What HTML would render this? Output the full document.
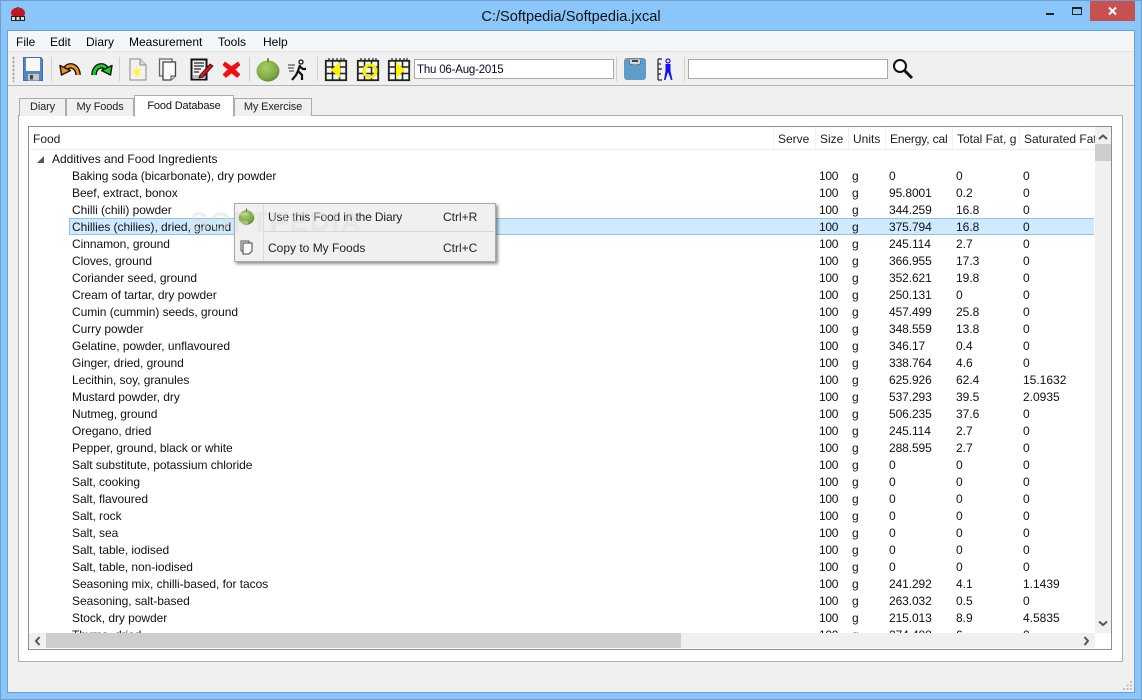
<!DOCTYPE html>
<html><head><meta charset="utf-8"><title>C:/Softpedia/Softpedia.jxcal</title>
<style>
html,body{margin:0;padding:0;width:1142px;height:700px;overflow:hidden;background:#8bc6fa;font-family:"Liberation Sans",sans-serif;font-size:12px;color:#111}
div,span,svg{position:absolute;white-space:nowrap}
svg{overflow:visible}
.sep{width:1px;background:#d0d0d0;top:57px;height:24px}
.t{top:1px;line-height:17px}
.r{left:29px;width:1066px;height:17px}
.a{left:43px;letter-spacing:-.05px}.b{left:790px;letter-spacing:-.3px}.c{left:823px}.d{left:860px;letter-spacing:-.1px}.e{left:927px}.f{left:994px}
.hd{top:131px;line-height:16px;color:#1c1c1c}
.hs{top:127px;height:23px;width:1px;background:#edf3f9}
.m{top:35px;line-height:14px;color:#000}
.tab{top:98px;height:17px;background:#f0f0f0;border:1px solid #acacac;border-bottom:none;line-height:16px;text-align:center;color:#222;font-size:11px;letter-spacing:-.15px}
</style></head><body>
<div style="left:0;top:0;width:1142px;height:700px;box-sizing:border-box;border:1px solid #6f9fcf;background:#8bc6fa"></div>
<svg style="left:9px;top:7px" width="18" height="16" viewBox="0 0 18 16"><ellipse cx="9" cy="6" rx="7" ry="5.500" fill="#c8141c"/><rect x="8" y="0" width="2" height="3" fill="#555"/><rect x="2" y="9" width="14" height="5" fill="#222"/><rect x="3" y="10" width="3" height="3" fill="#ddd"/><rect x="7.500" y="10" width="3" height="3" fill="#ddd"/><rect x="12" y="10" width="3" height="3" fill="#ddd"/></svg>
<div style="left:340px;width:462px;top:8px;text-align:center;font-size:14.6px;line-height:18px;color:#111">C:/Softpedia/Softpedia.jxcal</div>
<div style="left:1046px;top:13px;width:8px;height:2px;background:#222"></div>
<div style="left:1072px;top:7px;width:8px;height:5px;border:1px solid #222;border-top-width:2px"></div>
<div style="left:1090px;top:1px;width:45px;height:20px;background:#c75050"></div>
<svg style="left:1108px;top:7px" width="9" height="8"><path d="M1 0.500L8 7.500M8 0.500L1 7.500" stroke="#fff" stroke-width="2"/></svg>

<div style="left:7px;top:30px;width:1128px;height:663px;background:#6f9fcf"></div>
<div style="left:8px;top:31px;width:1126px;height:661px;background:#f0f0f0"></div>
<div style="left:8px;top:31px;width:1126px;height:20px;background:#f5f6f7"></div>
<div style="left:8px;top:51px;width:1126px;height:1px;background:#e4e4e4"></div>
<div style="left:8px;top:85px;width:1126px;height:1px;background:#b4b4b4"></div>
<div class="m" style="left:16px">File</div>
<div class="m" style="left:50px">Edit</div>
<div class="m" style="left:86px">Diary</div>
<div class="m" style="left:129px">Measurement</div>
<div class="m" style="left:218px">Tools</div>
<div class="m" style="left:263px">Help</div>

<!-- toolbar -->
<div style="left:12px;top:56px;width:3px;height:26px;background-image:radial-gradient(#aaa 1px,transparent 1px);background-size:3px 4px"></div>
<svg style="left:23px;top:57px" width="20" height="24" viewBox="0 0 20 24"><path d="M0.500 0.500H18L19.500 2.500V23.500H0.500Z" fill="#5586c4" stroke="#3f6ea8"/><rect x="3" y="1" width="14" height="13" fill="#f8f8f8"/><rect x="5" y="17" width="11" height="6.500" fill="#c4c8cc"/><rect x="7" y="18" width="3" height="4.500" fill="#444"/></svg>
<div class="sep" style="left:51px"></div>
<svg style="left:59px;top:62px" width="22" height="14" viewBox="0 0 22 14"><path d="M19 13C19 4 10 1 6.500 7" fill="none" stroke="#111" stroke-width="5.600"/><path d="M19 13C19 4 10 1 6.500 7" fill="none" stroke="#f0901e" stroke-width="3"/><path d="M1 3.500L11.500 8.500L2.500 13Z" fill="#f0901e" stroke="#111" stroke-width="1.400" stroke-linejoin="round"/></svg>
<svg style="left:91px;top:62px" width="22" height="14" viewBox="0 0 22 14"><path d="M3 13C3 4 12 1 15.500 7" fill="none" stroke="#111" stroke-width="5.600"/><path d="M3 13C3 4 12 1 15.500 7" fill="none" stroke="#14d228" stroke-width="3"/><path d="M21 3.500L10.500 8.500L19.500 13Z" fill="#14d228" stroke="#111" stroke-width="1.400" stroke-linejoin="round"/></svg>
<div class="sep" style="left:119px"></div>
<svg style="left:129px;top:58px" width="18" height="23" viewBox="0 0 18 23"><path d="M1 1H11L17 7V22H1Z" fill="#f4f2ec" stroke="#888"/><path d="M11 1V7H17" fill="#ddd" stroke="#888"/><path d="M8 8L9 12L13 11L10 14L13 17L9 15.500L8 20L7 15.500L3 17L6 14L3 11L7 12Z" fill="#f8f83a"/></svg>
<svg style="left:158px;top:58px" width="19" height="23" viewBox="0 0 19 23"><path d="M1.500 1H14V18H1.500Z" fill="#f4f4f4" stroke="#666" stroke-width="1.300"/><path d="M5 4H17.500V18L13 22H5Z" fill="#fafafa" stroke="#444" stroke-width="1.300"/><path d="M13 22V18H17.500" fill="#ddd" stroke="#444"/></svg>
<svg style="left:190px;top:58px" width="24" height="23" viewBox="0 0 24 23"><rect x="1.500" y="1.500" width="15" height="20" fill="#f5f5f5" stroke="#111" stroke-width="2"/><path d="M4 5H14M4 8H14M4 11H11M4 14H9" stroke="#222" stroke-width="1.300"/><rect x="3" y="17" width="12" height="4" fill="#bbb"/><path d="M10 17L20 6L23 8L13 19L9 20Z" fill="#e0101c" stroke="#111" stroke-width=".8"/></svg>
<svg style="left:222px;top:60px" width="19" height="19" viewBox="0 0 19 19"><path d="M3 2.500L9.500 7L16 2.500L17.500 5L12.500 9.500L17.500 14.500L15 17L9.500 12.500L4 17L1.500 14.500L6.500 9.500L1.500 5Z" fill="#ee0f17" stroke="#ee0f17" stroke-width="1.400" stroke-linejoin="round"/></svg>
<div class="sep" style="left:249px"></div>
<svg style="left:256px;top:57px" width="24" height="25" viewBox="0 0 24 25"><defs><radialGradient id="g1" cx=".4" cy=".35" r=".75"><stop offset="0" stop-color="#a8cc6a"/><stop offset=".65" stop-color="#7fab42"/><stop offset="1" stop-color="#4f7e2a"/></radialGradient></defs><ellipse cx="12" cy="14" rx="11.500" ry="10.500" fill="url(#g1)"/><path d="M12 5V1" stroke="#5a4020" stroke-width="1.200"/></svg>
<svg style="left:287px;top:59px" width="20" height="22" viewBox="0 0 20 22"><circle cx="14" cy="3" r="2" fill="#fff" stroke="#111" stroke-width="1.300"/><path d="M13 6L11 12L15 16L15 21M11 12L9 16L5 21M12 7L16 10L19 10" fill="none" stroke="#111" stroke-width="2.200"/><path d="M1 6H8M1 9H7M2 12H7" stroke="#555" stroke-width="1.200"/></svg>
<div class="sep" style="left:317px"></div>
<svg style="left:324px;top:58px" width="24" height="23" viewBox="0 0 24 23"><g id="cal"><rect x="1.800" y="2.800" width="20.400" height="19.400" fill="#f6f6ee" stroke="#222" stroke-width="1.800"/><path d="M2 9H22M2 15.500H22M8.500 3V22M15.500 3V22" stroke="#222" stroke-width="1.500"/><path d="M5 0V3M9 0V3M13 0V3M17 0V3M20 0V3" stroke="#222" stroke-width="1.200"/></g><path d="M16 4V20L7 12Z" fill="#f8f400"/></svg>
<svg style="left:356px;top:58px" width="24" height="23" viewBox="0 0 24 23"><use href="#cal"/><circle cx="14" cy="13" r="6" fill="none" stroke="#f4f000" stroke-width="3"/></svg>
<svg style="left:387px;top:58px" width="24" height="23" viewBox="0 0 24 23"><use href="#cal"/><path d="M9 4V20L18 12Z" fill="#f8f400"/></svg>
<div style="left:414px;top:59px;width:198px;height:18px;background:#fff;border:1px solid #a9a9a9;line-height:20px;color:#0a0a2a"><span style="left:2px;top:0;font-size:11.5px;letter-spacing:-.2px">Thu 06-Aug-2015</span></div>
<div class="sep" style="left:616px"></div>
<svg style="left:623px;top:57px" width="24" height="24" viewBox="0 0 24 24"><rect x="1" y="1" width="22" height="22" rx="3" fill="#5f9dc9"/><path d="M6 2H18L17 7C13 8 11 8 7 7Z" fill="#d8d8d8" stroke="#555" stroke-width=".6"/><rect x="9" y="3" width="6" height="2" fill="#444"/></svg>
<svg style="left:656px;top:58px" width="18" height="23" viewBox="0 0 18 23"><path d="M2 1V22M2 1H6M2 6H5M2 11H6M2 16H5M2 22H6" stroke="#222" stroke-width="1.200" fill="none"/><circle cx="12" cy="3" r="2" fill="none" stroke="#1414ee" stroke-width="1.200"/><path d="M9.500 6H14.500V13L16.500 22H15L12 14L9.500 22H8L9.500 13Z" fill="#1414ee"/></svg>
<div class="sep" style="left:684px"></div>
<div style="left:688px;top:59px;width:198px;height:18px;background:#fff;border:1px solid #a9a9a9"></div>
<svg style="left:892px;top:58px" width="22" height="22" viewBox="0 0 22 22"><circle cx="8" cy="8" r="6" fill="#fff" stroke="#111" stroke-width="2"/><path d="M12.500 12.500L20 20" stroke="#111" stroke-width="3"/></svg>

<!-- tabs -->
<div style="left:18px;top:115px;width:1103px;height:545px;background:#fff;border:1px solid #acacac"></div>
<div class="tab" style="left:19px;width:45px">Diary</div>
<div class="tab" style="left:66px;width:66px">My Foods</div>
<div class="tab" style="left:234px;width:76px">My Exercise</div>
<div class="tab" style="left:134px;top:95px;width:98px;height:21px;background:#fff;z-index:2;line-height:21px;color:#111">Food Database</div>

<!-- tree -->
<div style="left:28px;top:126px;width:1082px;height:522px;background:#fff;border:1px solid #8e8e8e"></div>
<div class="hd" style="left:33px">Food</div>
<div class="hs" style="left:773px"></div><div class="hd" style="left:778px">Serve</div>
<div class="hs" style="left:815px"></div><div class="hd" style="left:820px">Size</div>
<div class="hs" style="left:848px"></div><div class="hd" style="left:853px">Units</div>
<div class="hs" style="left:885px"></div><div class="hd" style="left:890px;letter-spacing:-.15px">Energy, cal</div>
<div class="hs" style="left:952px"></div><div class="hd" style="left:957px">Total Fat, g</div>
<div class="hs" style="left:1019px"></div><div style="left:1024px;top:131px;width:71px;overflow:hidden;line-height:16px;color:#1c1c1c">Saturated Fat, g</div>
<div style="left:29px;top:149px;width:1066px;height:1px;background:#e8f0f7"></div>

<div style="left:29px;top:150px;width:1066px;height:483px;overflow:hidden">
<div style="left:40px;top:68px;width:1024px;height:15px;border:1px solid #8cc4ec;border-right:none;background:#d0e9fc"></div>
<svg style="left:8px;top:6px" width="7" height="7"><path d="M7 0V7H0Z" fill="#555"/></svg>
<div class="t" style="left:23px">Additives and Food Ingredients</div>
<div class="r" style="left:0;top:17px"><span class="t a">Baking soda (bicarbonate), dry powder</span><span class="t b">100</span><span class="t c">g</span><span class="t d">0</span><span class="t e">0</span><span class="t f">0</span></div>
<div class="r" style="left:0;top:34px"><span class="t a">Beef, extract, bonox</span><span class="t b">100</span><span class="t c">g</span><span class="t d">95.8001</span><span class="t e">0.2</span><span class="t f">0</span></div>
<div class="r" style="left:0;top:51px"><span class="t a">Chilli (chili) powder</span><span class="t b">100</span><span class="t c">g</span><span class="t d">344.259</span><span class="t e">16.8</span><span class="t f">0</span></div>
<div class="r" style="left:0;top:68px"><span class="t a">Chillies (chilies), dried, ground</span><span class="t b">100</span><span class="t c">g</span><span class="t d">375.794</span><span class="t e">16.8</span><span class="t f">0</span></div>
<div class="r" style="left:0;top:85px"><span class="t a">Cinnamon, ground</span><span class="t b">100</span><span class="t c">g</span><span class="t d">245.114</span><span class="t e">2.7</span><span class="t f">0</span></div>
<div class="r" style="left:0;top:102px"><span class="t a">Cloves, ground</span><span class="t b">100</span><span class="t c">g</span><span class="t d">366.955</span><span class="t e">17.3</span><span class="t f">0</span></div>
<div class="r" style="left:0;top:119px"><span class="t a">Coriander seed, ground</span><span class="t b">100</span><span class="t c">g</span><span class="t d">352.621</span><span class="t e">19.8</span><span class="t f">0</span></div>
<div class="r" style="left:0;top:136px"><span class="t a">Cream of tartar, dry powder</span><span class="t b">100</span><span class="t c">g</span><span class="t d">250.131</span><span class="t e">0</span><span class="t f">0</span></div>
<div class="r" style="left:0;top:153px"><span class="t a">Cumin (cummin) seeds, ground</span><span class="t b">100</span><span class="t c">g</span><span class="t d">457.499</span><span class="t e">25.8</span><span class="t f">0</span></div>
<div class="r" style="left:0;top:170px"><span class="t a">Curry powder</span><span class="t b">100</span><span class="t c">g</span><span class="t d">348.559</span><span class="t e">13.8</span><span class="t f">0</span></div>
<div class="r" style="left:0;top:187px"><span class="t a">Gelatine, powder, unflavoured</span><span class="t b">100</span><span class="t c">g</span><span class="t d">346.17</span><span class="t e">0.4</span><span class="t f">0</span></div>
<div class="r" style="left:0;top:204px"><span class="t a">Ginger, dried, ground</span><span class="t b">100</span><span class="t c">g</span><span class="t d">338.764</span><span class="t e">4.6</span><span class="t f">0</span></div>
<div class="r" style="left:0;top:221px"><span class="t a">Lecithin, soy, granules</span><span class="t b">100</span><span class="t c">g</span><span class="t d">625.926</span><span class="t e">62.4</span><span class="t f">15.1632</span></div>
<div class="r" style="left:0;top:238px"><span class="t a">Mustard powder, dry</span><span class="t b">100</span><span class="t c">g</span><span class="t d">537.293</span><span class="t e">39.5</span><span class="t f">2.0935</span></div>
<div class="r" style="left:0;top:255px"><span class="t a">Nutmeg, ground</span><span class="t b">100</span><span class="t c">g</span><span class="t d">506.235</span><span class="t e">37.6</span><span class="t f">0</span></div>
<div class="r" style="left:0;top:272px"><span class="t a">Oregano, dried</span><span class="t b">100</span><span class="t c">g</span><span class="t d">245.114</span><span class="t e">2.7</span><span class="t f">0</span></div>
<div class="r" style="left:0;top:289px"><span class="t a">Pepper, ground, black or white</span><span class="t b">100</span><span class="t c">g</span><span class="t d">288.595</span><span class="t e">2.7</span><span class="t f">0</span></div>
<div class="r" style="left:0;top:306px"><span class="t a">Salt substitute, potassium chloride</span><span class="t b">100</span><span class="t c">g</span><span class="t d">0</span><span class="t e">0</span><span class="t f">0</span></div>
<div class="r" style="left:0;top:323px"><span class="t a">Salt, cooking</span><span class="t b">100</span><span class="t c">g</span><span class="t d">0</span><span class="t e">0</span><span class="t f">0</span></div>
<div class="r" style="left:0;top:340px"><span class="t a">Salt, flavoured</span><span class="t b">100</span><span class="t c">g</span><span class="t d">0</span><span class="t e">0</span><span class="t f">0</span></div>
<div class="r" style="left:0;top:357px"><span class="t a">Salt, rock</span><span class="t b">100</span><span class="t c">g</span><span class="t d">0</span><span class="t e">0</span><span class="t f">0</span></div>
<div class="r" style="left:0;top:374px"><span class="t a">Salt, sea</span><span class="t b">100</span><span class="t c">g</span><span class="t d">0</span><span class="t e">0</span><span class="t f">0</span></div>
<div class="r" style="left:0;top:391px"><span class="t a">Salt, table, iodised</span><span class="t b">100</span><span class="t c">g</span><span class="t d">0</span><span class="t e">0</span><span class="t f">0</span></div>
<div class="r" style="left:0;top:408px"><span class="t a">Salt, table, non-iodised</span><span class="t b">100</span><span class="t c">g</span><span class="t d">0</span><span class="t e">0</span><span class="t f">0</span></div>
<div class="r" style="left:0;top:425px"><span class="t a">Seasoning mix, chilli-based, for tacos</span><span class="t b">100</span><span class="t c">g</span><span class="t d">241.292</span><span class="t e">4.1</span><span class="t f">1.1439</span></div>
<div class="r" style="left:0;top:442px"><span class="t a">Seasoning, salt-based</span><span class="t b">100</span><span class="t c">g</span><span class="t d">263.032</span><span class="t e">0.5</span><span class="t f">0</span></div>
<div class="r" style="left:0;top:459px"><span class="t a">Stock, dry powder</span><span class="t b">100</span><span class="t c">g</span><span class="t d">215.013</span><span class="t e">8.9</span><span class="t f">4.5835</span></div>
<div class="r" style="left:0;top:476px"><span class="t a">Thyme, dried</span><span class="t b">100</span><span class="t c">g</span><span class="t d">274.488</span><span class="t e">6</span><span class="t f">0</span></div>
</div>

<!-- scrollbars -->
<div style="left:1095px;top:127px;width:16px;height:506px;background:#f0f0f0"></div>
<div style="left:1095px;top:144px;width:16px;height:17px;background:#cdcdcd"></div>
<svg style="left:1098px;top:134px" width="10" height="7"><path d="M1 5L5 1.500L9 5" fill="none" stroke="#555" stroke-width="2"/></svg>
<svg style="left:1098px;top:620px" width="10" height="7"><path d="M1 1.500L5 5L9 1.500" fill="none" stroke="#555" stroke-width="2"/></svg>
<div style="left:29px;top:633px;width:1066px;height:15px;background:#f0f0f0"></div>
<div style="left:46px;top:633px;width:635px;height:15px;background:#cdcdcd"></div>
<svg style="left:34px;top:636px" width="7" height="10"><path d="M5.500 1L2 5L5.500 9" fill="none" stroke="#555" stroke-width="2"/></svg>
<svg style="left:1083px;top:636px" width="7" height="10"><path d="M1.500 1L5 5L1.500 9" fill="none" stroke="#555" stroke-width="2"/></svg>

<!-- context menu -->
<div style="left:234px;top:203px;width:260px;height:57px;background:#f0f0f0;border:1px solid #a8a8a8;box-shadow:2px 2px 3px rgba(0,0,0,.45)"></div>
<div style="left:263px;top:204px;width:1px;height:57px;background:#dcdcdc"></div>
<div style="left:264px;top:231px;width:230px;height:1px;background:#d7d7d7"></div>
<svg style="left:238px;top:208px" width="17" height="17" viewBox="0 0 24 25"><ellipse cx="12" cy="14" rx="11.500" ry="10.500" fill="url(#g1)"/><path d="M12 5V1" stroke="#5a4020" stroke-width="1.400"/></svg>
<svg style="left:240px;top:240px" width="13" height="15" viewBox="0 0 13 15"><path d="M1 1H9V11H1Z" fill="#f4f4f4" stroke="#555"/><path d="M3 3H12V11L9 14H3Z" fill="#fafafa" stroke="#444"/></svg>
<div style="left:268px;top:210px;line-height:14px;color:#222;letter-spacing:-.15px">Use this Food in the Diary</div>
<div style="left:443px;top:210px;line-height:14px;color:#222">Ctrl+R</div>
<div style="left:268px;top:241px;line-height:14px;color:#222">Copy to My Foods</div>
<div style="left:443px;top:241px;line-height:14px;color:#222">Ctrl+C</div>
<div style="left:190px;top:207px;font-size:27px;line-height:30px;letter-spacing:2px;font-weight:bold;color:rgba(255,255,255,.32);text-shadow:0 0 1px rgba(130,130,130,.18)">SOFTPEDIA</div>

<!-- size grip -->
<svg style="left:1122px;top:680px" width="11" height="11"><path d="M8 1h2v2H8zM4.500 4.500h2v2h-2zM8 4.500h2v2H8zM1 8h2v2H1zM4.500 8h2v2h-2zM8 8h2v2H8z" fill="#c0c0c0"/></svg>
</body></html>
